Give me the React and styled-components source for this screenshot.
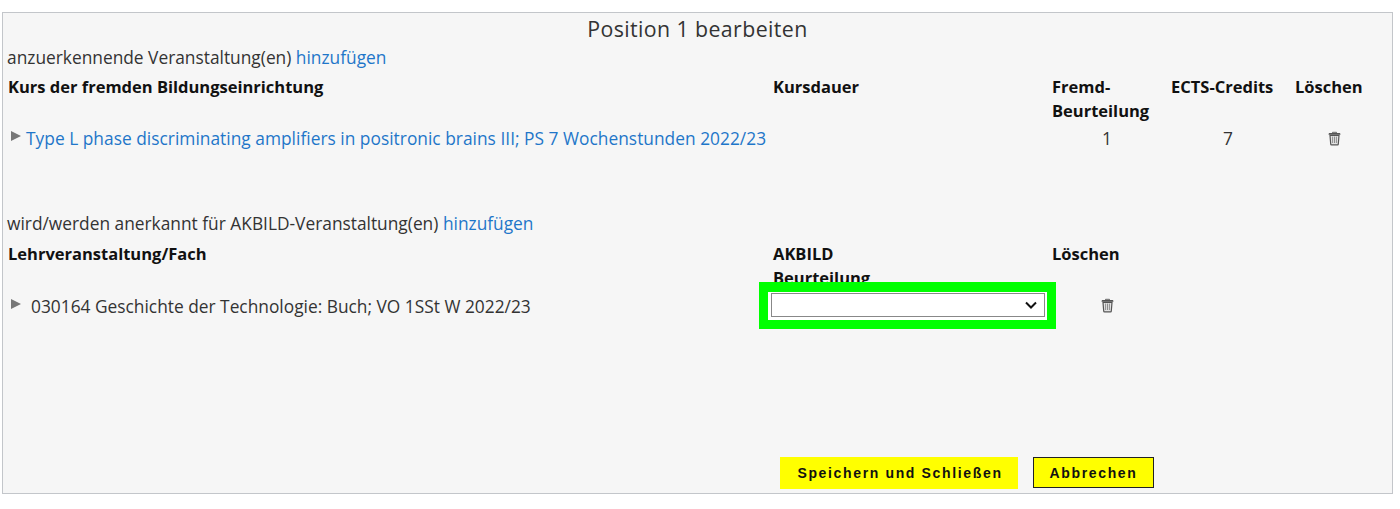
import React from 'react'
import styled, { createGlobalStyle } from 'styled-components'

const GlobalStyle = createGlobalStyle`
  html, body { margin: 0; padding: 0; background: #fff; }
  body { font-family: "Open Sans", "Noto Sans", sans-serif; color: #333; }
`

const chevron = "url(\"data:image/svg+xml,%3Csvg xmlns='http://www.w3.org/2000/svg' width='12' height='8'%3E%3Cpath d='M1 1.5l5 5 5-5' fill='none' stroke='%23111' stroke-width='2'/%3E%3C/svg%3E\")"

const TrashIcon = () => (
  <svg width="15" height="15" viewBox="0 0 15 15" fill="none">
    <path d="M5.5 2.2V1.3h4v.9" stroke="#666" strokeWidth="1" />
    <path d="M1.6 3.2c0-.7.5-1.1 1.2-1.1h9.4c.7 0 1.2.4 1.2 1.1v.6H1.6z" fill="#555" />
    <path d="M3 4.4l.7 8.5c0 .5.4.9.9.9h5.8c.5 0 .9-.4.9-.9l.7-8.5z" stroke="#555" strokeWidth="1.2" fill="#e2e2e2" />
    <path d="M5.6 5.6v6.4M7.5 5.6v6.4M9.4 5.6v6.4" stroke="#777" strokeWidth=".8" />
  </svg>
)

const App = () => {
  return (
    <Page>
      <GlobalStyle />
      <Panel>
        <Title>Position 1 bearbeiten</Title>

        <SectionLabel>
          anzuerkennende Veranstaltung(en) <Link>hinzufügen</Link>
        </SectionLabel>
        <CourseTable>
          <HeadCell>Kurs der fremden Bildungseinrichtung</HeadCell>
          <HeadCell>Kursdauer</HeadCell>
          <HeadCell>Fremd-<br />Beurteilung</HeadCell>
          <HeadCell>ECTS-Credits</HeadCell>
          <HeadCell>Löschen</HeadCell>

          <NameCell>
            <Arrow />
            <Link>Type L phase discriminating amplifiers in positronic brains III; PS 7 Wochenstunden 2022/23</Link>
          </NameCell>
          <div />
          <ValueCell $offset={50}>1</ValueCell>
          <ValueCell $offset={52}>7</ValueCell>
          <ValueCell $offset={32}><TrashIcon /></ValueCell>
        </CourseTable>

        <SectionLabelLower>
          wird/werden anerkannt für AKBILD-Veranstaltung(en) <Link>hinzufügen</Link>
        </SectionLabelLower>
        <SubjectTable>
          <HeadCell>Lehrveranstaltung/Fach</HeadCell>
          <ClippedHead>AKBILD<br />Beurteilung</ClippedHead>
          <HeadCell>Löschen</HeadCell>

          <NameCell>
            <Arrow />
            <Plain>030164 Geschichte der Technologie: Buch; VO 1SSt W 2022/23</Plain>
          </NameCell>
          <Highlight>
            <SelectFrame>
              <GradeSelect defaultValue="">
                <option value=""></option>
                <option value="1">1</option>
              </GradeSelect>
            </SelectFrame>
          </Highlight>
          <SubjectTrash $offset={47}><TrashIcon /></SubjectTrash>
        </SubjectTable>

        <Actions>
          <SaveButton>Speichern und Schließen</SaveButton>
          <CancelButton>Abbrechen</CancelButton>
        </Actions>
      </Panel>
    </Page>
  )
}

const Page = styled.div`
  width: 1400px;
  height: 509px;
  padding: 12px 7px 0 2px;
  box-sizing: border-box;
  overflow: hidden;
`

const Panel = styled.div`
  height: 482px;
  box-sizing: border-box;
  background: #f6f6f6;
  border: 1px solid #c3c6ca;
  display: flex;
  flex-direction: column;
  font-size: 17.33px;
  line-height: 24px;
`

const Title = styled.div`
  text-align: center;
  font-size: 21.33px;
  line-height: 30px;
  margin-top: 1px;
  letter-spacing: 0.4px;
`

const SectionLabel = styled.div`
  padding-left: 4px;
  line-height: 26px;
`

const SectionLabelLower = styled(SectionLabel)`
  margin-top: 60px;
`

const Link = styled.a`
  color: #1f76c9;
  cursor: pointer;
`

const Plain = styled.span`
  margin-left: 5px;
`

const CourseTable = styled.div`
  display: grid;
  grid-template-columns: 765px 279px 119px 124px 1fr;
  padding: 5px 0 0 5px;
  ${Link} { letter-spacing: 0.02px; }
`

const SubjectTable = styled.div`
  display: grid;
  grid-template-columns: 765px 279px 1fr;
  padding: 6px 0 0 5px;
`

const HeadCell = styled.div`
  font-weight: 700;
  color: #111;
  font-size: 16.5px;
  line-height: 24px;
  white-space: nowrap;
`

const ClippedHead = styled(HeadCell)`
  height: 49px;
`

const NameCell = styled.div`
  display: flex;
  align-items: flex-start;
  white-space: nowrap;
  padding-top: 3px;
`

const Arrow = styled.span`
  display: inline-block;
  flex: none;
  width: 0;
  height: 0;
  margin: 5px 5px 0 3px;
  border-left: 10px solid #777;
  border-top: 5px solid transparent;
  border-bottom: 5px solid transparent;
`

const ValueCell = styled.div`
  padding-left: ${(p) => p.$offset}px;
  padding-top: 3px;
  height: 24px;
  display: flex;
  align-items: center;
`

const SubjectTrash = styled(ValueCell)`
  padding-top: 2px;
  padding-left: ${(p) => p.$offset + 1}px;
`

const Highlight = styled.div`
  position: relative;
  width: 297px;
  height: 47px;
  margin: -9px 0 0 -14px;
  box-sizing: border-box;
  background: #00ff00;
  padding: 10px 9px 9px;
`

const SelectFrame = styled.div`
  background: #fff;
  padding: 1px 2px 3px 3px;
`

const GradeSelect = styled.select`
  display: block;
  width: 100%;
  height: 24px;
  box-sizing: border-box;
  appearance: none;
  background: #fff ${chevron} no-repeat right 7px center;
  border: 1px solid #888;
  border-radius: 0;
  font-family: "Open Sans", sans-serif;
  font-size: 15px;
`

const Actions = styled.div`
  margin-top: auto;
  display: flex;
  align-items: flex-start;
  gap: 15px;
  padding: 0 0 4px 777px;
`

const SaveButton = styled.button`
  height: 32px;
  width: 238px;
  box-sizing: border-box;
  border: none;
  background: #ffff00;
  color: #111;
  font-family: "Liberation Sans", Arial, sans-serif;
  font-weight: 700;
  font-size: 14px;
  letter-spacing: 1.65px;
  padding: 0 0 0 2px;
`

const CancelButton = styled(SaveButton)`
  width: 121px;
  height: 31px;
  border: 1px solid #222;
  padding: 0;
`

export default App
